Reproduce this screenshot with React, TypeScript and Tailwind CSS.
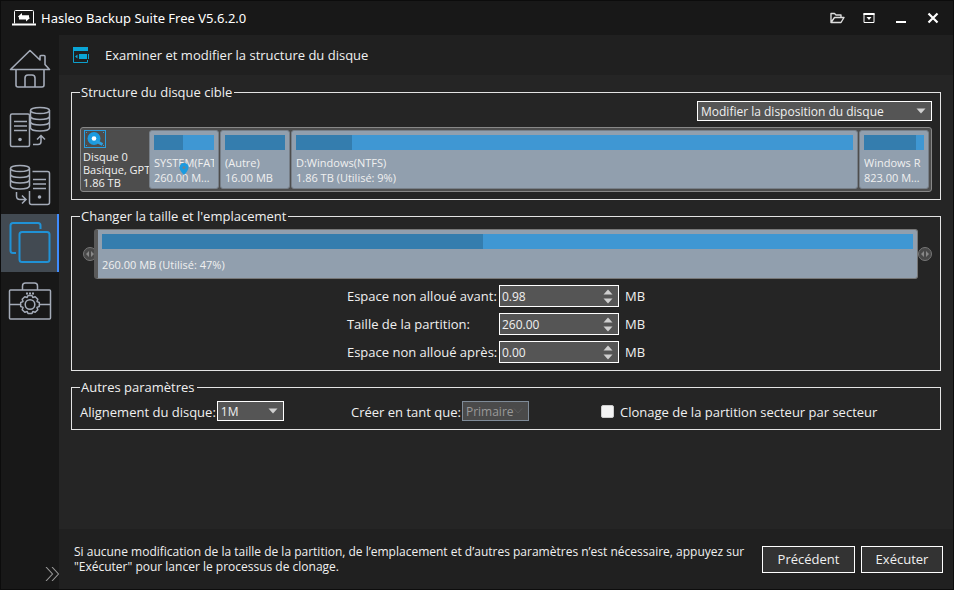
import React, { useState } from 'react';

const PARTITIONS = [
  { name: 'SYSTEM(FAT32)', size: '260.00 MB (47%)', used: 48, pinned: true, box: 'w-[70px]' },
  { name: '(Autre)', size: '16.00 MB', used: 100, pinned: false, box: 'w-[70px]' },
  { name: 'D:Windows(NTFS)', size: '1.86 TB (Utilisé: 9%)', used: 10, pinned: false, box: 'flex-1' },
  { name: 'Windows R', size: '823.00 MB (87%)', used: 87, pinned: false, box: 'w-[70px]' },
];

const HomeIcon = () => (
  <svg width="42" height="40" viewBox="0 0 42 40" fill="none" stroke="currentColor" strokeWidth="1.6" strokeLinejoin="round">
    <path d="M1.5 20.5 21 1.5 31 11V7.5q0-1 1-1h3q1 0 1 1V15.5l4.5 5z" />
    <path d="M7 20.5V36q0 2 2 2H33q2 0 2-2V20.5" />
    <path d="M16 38V29q0-3 3-3h4q3 0 3 3V38" />
  </svg>
);

const BackupIcon = () => (
  <svg width="42" height="42" viewBox="0 0 42 42" fill="none" stroke="currentColor" strokeWidth="1.5">
    <rect x="1.5" y="8" width="19" height="32.5" rx="1.5" />
    <path d="M5 15.5h13M5 20h13M5 24.5h13" />
    <circle cx="11" cy="33.5" r="1.8" fill="currentColor" stroke="none" />
    <ellipse cx="31" cy="4.5" rx="9.5" ry="3" />
    <path d="M21.5 4.5V22c1 4 18 4 19 0V4.5M21.5 10.5c1 4 18 4 19 0M21.5 16c1 4 18 4 19 0" />
    <path d="M24 38.5h5q3 0 3-3V30M28 33.5l4-4 4 4" />
  </svg>
);

const RestoreIcon = () => (
  <svg width="42" height="42" viewBox="0 0 42 42" fill="none" stroke="currentColor" strokeWidth="1.5">
    <ellipse cx="11" cy="4.5" rx="9.5" ry="3" />
    <path d="M1.5 4.5V22c1 4 18 4 19 0V4.5M1.5 10.5c1 4 18 4 19 0M1.5 16c1 4 18 4 19 0" />
    <path d="M20.5 27V38.5q0 2 2 2H38.5q2 0 2-2V9.5q0-2-2-2H23.5" />
    <path d="M24 15.5h13M24 20h13M24 24.5h13" />
    <circle cx="30.5" cy="33" r="1.8" fill="currentColor" stroke="none" />
    <path d="M7.5 28v4q0 3.5 3.5 3.5h5M13 31.5l4 4-4 4" />
  </svg>
);

const CloneIcon = () => (
  <svg width="42" height="42" viewBox="0 0 42 42" fill="none" stroke="#2092d6" strokeWidth="2">
    <path d="M7 31H4Q1.500 31 1.500 28.500V3.500Q1.500 1 4 1H29q2.500 0 2.500 2.500V7" />
    <rect x="10.500" y="10" width="30" height="30" rx="2.500" />
  </svg>
);

const ToolsIcon = () => (
  <svg width="44" height="40" viewBox="0 0 44 40" fill="none" stroke="currentColor" strokeWidth="1.5">
    <rect x="1.5" y="9" width="41" height="29" rx="1" />
    <path d="M14.5 9V5q0-3 3-3h9q3 0 3 3V9M2 23.5h10.5M31.5 23.5H42" />
    <path d="M18 12.5h2M21 12.5h2M24 12.5h2" strokeWidth="1.8" />
    <circle cx="22" cy="23.5" r="4.8" />
    <path d="m20 14.5 4 0 .8 2 2.4-.8 2.6 2.6-.8 2.3 2.3.9v4l-2.3.9.8 2.3-2.6 2.6-2.4-.8-.8 2h-4l-.8-2-2.4.8-2.6-2.6.8-2.300-2.300-.9v-4l2.300-.9-.8-2.300 2.600-2.600 2.400.8z" strokeLinejoin="round" />
  </svg>
);

const NAV = [
  { label: 'Accueil', icon: <HomeIcon /> },
  { label: 'Sauvegarde', icon: <BackupIcon /> },
  { label: 'Restauration', icon: <RestoreIcon /> },
  { label: 'Clonage', icon: <CloneIcon />, active: true },
  { label: 'Outils', icon: <ToolsIcon /> },
];

const TitleBar = () => (
  <header className="flex h-[34px] shrink-0 items-center bg-[#181818] pr-[14px] pl-[11px] text-white">
    <svg width="24" height="18" viewBox="0 0 24 18" fill="none" stroke="#fff">
      <path d="M2.5 14.5V2.5q0-1 1-1H20.5q1 0 1 1V14.5" />
      <path d="M0 15.5h24" strokeWidth="2" />
      <path d="M6 7.5 10 4v2.200h7v2.300H7zM18 9 14 12.500V10.500H7V8.500h10z" fill="#fff" stroke="none" />
    </svg>
    <h1 className="ml-[5px] flex-1 pt-[2px] font-['Noto_Sans',sans-serif] text-[13px]">Hasleo Backup Suite Free V5.6.2.0</h1>
    <div className="flex items-center gap-[18px]">
      <button aria-label="Ouvrir">
        <svg width="15" height="12" viewBox="0 0 15 12" fill="none" stroke="#ddd" strokeWidth="1.4" strokeLinejoin="round">
          <path d="M1 10.5V1.5h3.5l1.5 1.5h5V5M1 10.5 4.5 5.5h9.5L11 10.5z" />
        </svg>
      </button>
      <button aria-label="Menu">
        <svg width="12" height="12" viewBox="0 0 12 12">
          <path d="M1 1.5v9h10v-9z" fill="none" stroke="#fff" />
          <path d="M.5 1h11v2H.5zM3.5 5h5L6 8z" fill="#fff" />
        </svg>
      </button>
      <button aria-label="Réduire" className="ml-[2px]">
        <svg width="12" height="12" viewBox="0 0 12 12"><path d="M1 10h10" stroke="#fff" strokeWidth="2" /></svg>
      </button>
      <button aria-label="Fermer" className="ml-[2px]">
        <svg width="12" height="12" viewBox="0 0 12 12"><path d="m1.5 1.5 9 9M10.5 1.5l-9 9" stroke="#fff" strokeWidth="2.2" /></svg>
      </button>
    </div>
  </header>
);

const Sidebar = () => (
  <nav className="flex w-[58px] shrink-0 flex-col bg-[#181818] pt-[5px] text-[#a4abb8]">
    {NAV.map((n) => (
      <button
        key={n.label}
        aria-label={n.label}
        className={n.active ? 'flex h-[58px] items-center justify-center border-r-2 border-[#3f8cff] bg-[#424a52] pl-[2px]' : 'flex h-[58px] items-center justify-center'}
      >
        {n.icon}
      </button>
    ))}
    <button aria-label="Développer" className="mt-auto mb-2 self-end">
      <svg width="14" height="14" viewBox="0 0 14 14" fill="none" stroke="#999" strokeWidth="1.1">
        <path d="m1 0 6.5 7L1 14M7 0l6.5 7L7 14" />
      </svg>
    </button>
  </nav>
);

const Group = ({ title, children }: { title: string; children: React.ReactNode }) => (
  <fieldset className="min-w-0 border border-[#e4e4e4] px-2 pb-[7px]">
    <legend className="h-5 pr-[2px] pl-px leading-5">{title}</legend>
    {children}
  </fieldset>
);

const Arrow = ({ up }: { up?: boolean }) => (
  <svg width="10" height="6" viewBox="0 0 10 6" fill="#cfcfcf">
    <path d={up ? 'M.5 5.5 5 .5l4.5 5z' : 'M.5.5h9L5 5.5z'} />
  </svg>
);

const DiskIcon = () => (
  <svg width="22" height="18" viewBox="0 0 22 18" fill="none" stroke="#2a9fe0">
    <rect x=".5" y=".5" width="21" height="17" />
    <circle cx="10" cy="8.5" r="6.5" fill="#1b9be0" stroke="none" />
    <path d="m12 11 6.5 3.5" strokeWidth="3" />
    <circle cx="10" cy="8.5" r="2.3" fill="#fff" stroke="none" />
    <path d="M2 2.5h1M19 2.5h1M2 15.5h1M19 15.5h1" />
  </svg>
);

const UsageBar = ({ used }: { used: number }) => (
  <div className="h-[15px] bg-[#3f97d3]">
    <div className="h-full bg-[#347dae]" style={{ width: used + '%' }} />
  </div>
);

const Handle = () => (
  <button aria-label="Redimensionner" className="flex size-[14px] shrink-0 items-center justify-center rounded-full border border-[#777] bg-[#484848]">
    <svg width="8" height="6" viewBox="0 0 8 6" fill="#888"><path d="M3 0v6L0 3zM5 0v6l3-3z" /></svg>
  </button>
);

const SizeField = ({ id, label, initial }: { id: string; label: string; initial: string }) => {
  const [value, setValue] = useState(initial);
  const step = (d: number) => setValue(Math.max(0, Number(value) + d).toFixed(2));

  return (
    <>
      <label htmlFor={id} className="pt-[2px] whitespace-nowrap">{label}</label>
      <div className="flex h-[22px] border border-white bg-[#555]">
        <input id={id} value={value} onChange={(e) => setValue(e.target.value)} className="w-0 flex-1 bg-transparent pt-[2px] pl-[2px] text-[12px] outline-none" />
        <div className="flex w-5 flex-col items-center justify-center gap-[3px]">
          <button aria-label="Augmenter" onClick={() => step(1)}><Arrow up /></button>
          <button aria-label="Diminuer" onClick={() => step(-1)}><Arrow /></button>
        </div>
      </div>
      <span className="pt-[2px]">MB</span>
    </>
  );
};

export default function App() {
  const [sector, setSector] = useState(false);

  return (
    <div className="flex min-h-screen flex-col border border-[#0c0c0c] bg-[#252525] font-['Open_Sans','Noto_Sans',sans-serif] text-[13px] text-[#f0f0f0] [&_button_svg]:block">
      <TitleBar />
      <div className="flex flex-1">
        <Sidebar />
        <div className="flex min-w-0 flex-1 flex-col">
          <div className="flex h-10 shrink-0 items-center bg-[#202020] pl-[14px]">
            <svg width="16" height="16" viewBox="0 0 16 16" fill="none" stroke="#0d9fcc">
              <path d="M14.5 4V.5H.5V15.5H14.5V13" />
              <path d="M0 0h15v4H0z" fill="#0aa5d6" stroke="none" />
              <path d="M6 7h8v5H6zM4.5 7.5v4L2 9.5z" fill="#0aa5d6" stroke="none" />
              <path d="M15.5 7v5" />
            </svg>
            <h2 className="ml-4 pt-[2px] text-[13px]">Examiner et modifier la structure du disque</h2>
          </div>

          <main className="flex flex-1 flex-col gap-[6px] px-3 pt-[7px]">
            <Group title="Structure du disque cible">
              <div className="relative -mt-px ml-auto flex w-[235px] items-center">
                <select aria-label="Disposition" className="h-5 w-full appearance-none border border-white bg-[#555] pt-px pl-[3px] text-[12px] leading-4">
                  <option>Modifier la disposition du disque</option>
                </select>
                <span className="pointer-events-none absolute right-[6px]"><Arrow /></span>
              </div>
              <div className="mt-[6px] flex h-[65px] gap-px rounded-[3px] border border-[#888] bg-[#4d4d4d] p-[2px] text-[11px]">
                <div className="w-[65px] shrink-0 whitespace-nowrap leading-[13px]">
                  <div className="pb-[2px] pl-px"><DiskIcon /></div>
                  <p>Disque 0</p>
                  <p>Basique, GPT</p>
                  <p>1.86 TB</p>
                </div>
                {PARTITIONS.map((p) => (
                  <div key={p.name} className={'relative min-w-0 shrink-0 rounded-[3px] border border-[#777f88] bg-[#919fae] px-1 pt-1 leading-[15px] ' + p.box}>
                    <UsageBar used={p.used} />
                    <p className="mt-[5px] overflow-hidden whitespace-nowrap">{p.name}</p>
                    <p className="truncate">{p.size}</p>
                    {p.pinned && (
                      <svg className="absolute top-8 left-[29px]" width="10" height="12" viewBox="0 0 10 12">
                        <path d="M5 0a4.5 4.5 0 0 1 4.5 4.5C9.5 7.5 5 12 5 12S.5 7.5.5 4.5A4.5 4.5 0 0 1 5 0" fill="#1b9be0" />
                        <circle cx="5" cy="4.5" r="1.5" fill="#6b8294" />
                      </svg>
                    )}
                  </div>
                ))}
              </div>
            </Group>

            <Group title="Changer la taille et l'emplacement">
              <div className="mt-[3px] flex items-center pl-[3px]">
                <Handle />
                <div className="-ml-[3px] min-w-0 flex-1 rounded-[3px] border border-l-4 border-[#777] border-l-[#5a5a5a] bg-[#919fae] px-1 pt-1 pb-[6px] text-[11px] leading-[15px]">
                  <UsageBar used={47} />
                  <p className="mt-2">260.00 MB (Utilisé: 47%)</p>
                </div>
                <Handle />
              </div>
              <div className="mt-[6px] grid auto-rows-[22px] grid-cols-[146px_120px_auto] items-center justify-center gap-[6px] pr-5">
                <SizeField id="before" label="Espace non alloué avant:" initial="0.98" />
                <SizeField id="size" label="Taille de la partition:" initial="260.00" />
                <SizeField id="after" label="Espace non alloué après:" initial="0.00" />
              </div>
            </Group>

            <Group title="Autres paramètres">
              <div className="mt-[3px] grid grid-cols-[271fr_250fr_331fr] items-center leading-5">
                <div className="flex items-center gap-px">
                  <label htmlFor="align" className="pt-[2px]">Alignement du disque:</label>
                  <div className="relative flex w-[67px] items-center">
                    <select id="align" className="h-5 w-full appearance-none border border-white bg-[#555] pt-px pl-[3px] text-[12px] leading-4">
                      <option>1M</option>
                    </select>
                    <span className="pointer-events-none absolute right-[6px]"><Arrow /></span>
                  </div>
                </div>
                <div className="flex items-center gap-px">
                  <label htmlFor="kind" className="pt-[2px]">Créer en tant que:</label>
                  <div className="relative flex w-[67px] items-center">
                    <select id="kind" disabled className="h-5 w-full appearance-none border border-[#7f8b98] bg-[#4a4a4a] pt-px pl-[3px] text-[12px] leading-4 text-[#999]">
                      <option>Primaire</option>
                    </select>
                    <svg className="pointer-events-none absolute right-[6px]" width="10" height="6" viewBox="0 0 10 6" fill="none" stroke="#5c5c5c"><path d="m1 .5 4 4.5L9 .5" /></svg>
                  </div>
                </div>
                <div className="flex items-center gap-[6px]">
                  <input
                    id="sector"
                    type="checkbox"
                    checked={sector}
                    onChange={(e) => setSector(e.target.checked)}
                    className="size-[13px] appearance-none rounded-[2px] border border-[#ccc] bg-[#f3f3f3] checked:bg-[#3f97d3]"
                  />
                  <label htmlFor="sector" className="pt-[2px]">Clonage de la partition secteur par secteur</label>
                </div>
              </div>
            </Group>
          </main>

          <footer className="flex h-[60px] shrink-0 items-center gap-[6px] bg-[#202020] pr-[10px] pl-[15px]">
            <p className="max-w-[680px] flex-1 text-[12px] leading-[15px]">
              Si aucune modification de la taille de la partition, de l’emplacement et d’autres paramètres n’est nécessaire, appuyez sur "Exécuter" pour lancer le processus de clonage.
            </p>
            <button className="ml-auto h-[27px] w-[93px] border border-white bg-[#333] pt-[2px]">Précédent</button>
            <button className="h-[27px] w-[82px] border border-white bg-[#333] pt-[2px]">Exécuter</button>
          </footer>
        </div>
      </div>
    </div>
  );
}
